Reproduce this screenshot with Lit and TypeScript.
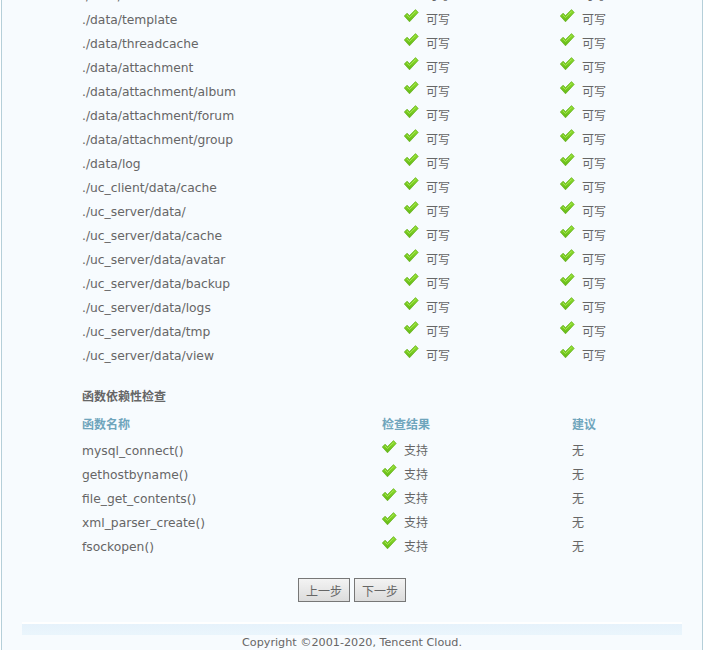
import { LitElement, html, css, svg } from "lit";
import { customElement } from "lit/decorators.js";

const dirs = ["./data/addonmd5","./data/template","./data/threadcache","./data/attachment","./data/attachment/album","./data/attachment/forum","./data/attachment/group","./data/log","./uc_client/data/cache","./uc_server/data/","./uc_server/data/cache","./uc_server/data/avatar","./uc_server/data/backup","./uc_server/data/logs","./uc_server/data/tmp","./uc_server/data/view"];
const funcs = ["mysql_connect()","gethostbyname()","file_get_contents()","xml_parser_create()","fsockopen()"];

const check = svg`<svg class="chk" width="16" height="14" viewBox="0 0 16 14"><defs><linearGradient id="g" x1="0" y1="0" x2="0" y2="1"><stop offset="0" stop-color="#93e032"/><stop offset="1" stop-color="#62b814"/></linearGradient></defs><path d="M.3 7 L3 4.2 L5.5 6.6 L11.5 .6 L14.2 3.4 L5.5 12.8 Z" fill="url(#g)" stroke="#62ad1a" stroke-width=".7" stroke-linejoin="round"/><path d="M3 6 L5.5 8.5 L11.5 2.5" fill="none" stroke="#a6e656" stroke-width=".9"/></svg>`;

@customElement("app-root")
export class AppRoot extends LitElement {
  static styles = css`
    :host { display: block; height: 650px; overflow: hidden; background: #fff; font: 12.3px/24px "DejaVu Sans", "Noto Sans CJK SC", sans-serif; color: #666; }
    .main { margin: -16px 0 0 1px; background: #f7fbfe; border: solid #b5cfd9; border-width: 0 1px; padding: 0 20px; height: 700px; box-sizing: border-box; }
    .inner { padding: 0 60px; }
    .row { display: grid; height: 24px; align-items: center; }
    .d { grid-template-columns: 322px 156px 100px; }
    .f { grid-template-columns: 300px 190px 100px; }
    .st { display: flex; align-items: center; gap: 6px; }
    .chk { display: block; margin-top: -9px; }
    .cjk { font-size: 12px; }
    h3 { margin: 0; font-size: 12px; font-weight: bold; line-height: 24px; padding-top: 17px; color: #666; }
    .head { color: #6fa5bc; font-weight: bold; font-size: 12px; margin-top: 4px; margin-bottom: 2px; }
    .btns { display: flex; justify-content: center; gap: 4px; padding: 19px 0 20px; }
    button { width: 52px; height: 24px; padding: 0; border: 1px solid #777; background: linear-gradient(#f3f3f3, #dcdcdc); color: #666; font: 12px "DejaVu Sans", "Noto Sans CJK SC", sans-serif; }
    .foot { border-top: 2px solid #fff; height: 11px; background: linear-gradient(#e6f2fb, #eaf5fc); }
    .copy { text-align: center; font-size: 11.2px; line-height: 18px; margin-top: -1px; }
  `;
  render() {
    return html`<div class="main"><div class="inner">
      ${dirs.map(d => html`<div class="row d"><div>${d}</div><div class="st">${check}<span class="cjk">可写</span></div><div class="st">${check}<span class="cjk">可写</span></div></div>`)}
      <h3>函数依赖性检查</h3>
      <div class="row f head"><div>函数名称</div><div>检查结果</div><div>建议</div></div>
      ${funcs.map(f => html`<div class="row f"><div>${f}</div><div class="st">${check}<span class="cjk">支持</span></div><div class="cjk">无</div></div>`)}
      <div class="btns"><button>上一步</button><button>下一步</button></div>
    </div><div class="foot"></div><div class="copy">Copyright ©2001-2020, Tencent Cloud.</div></div>`;
  }
}
